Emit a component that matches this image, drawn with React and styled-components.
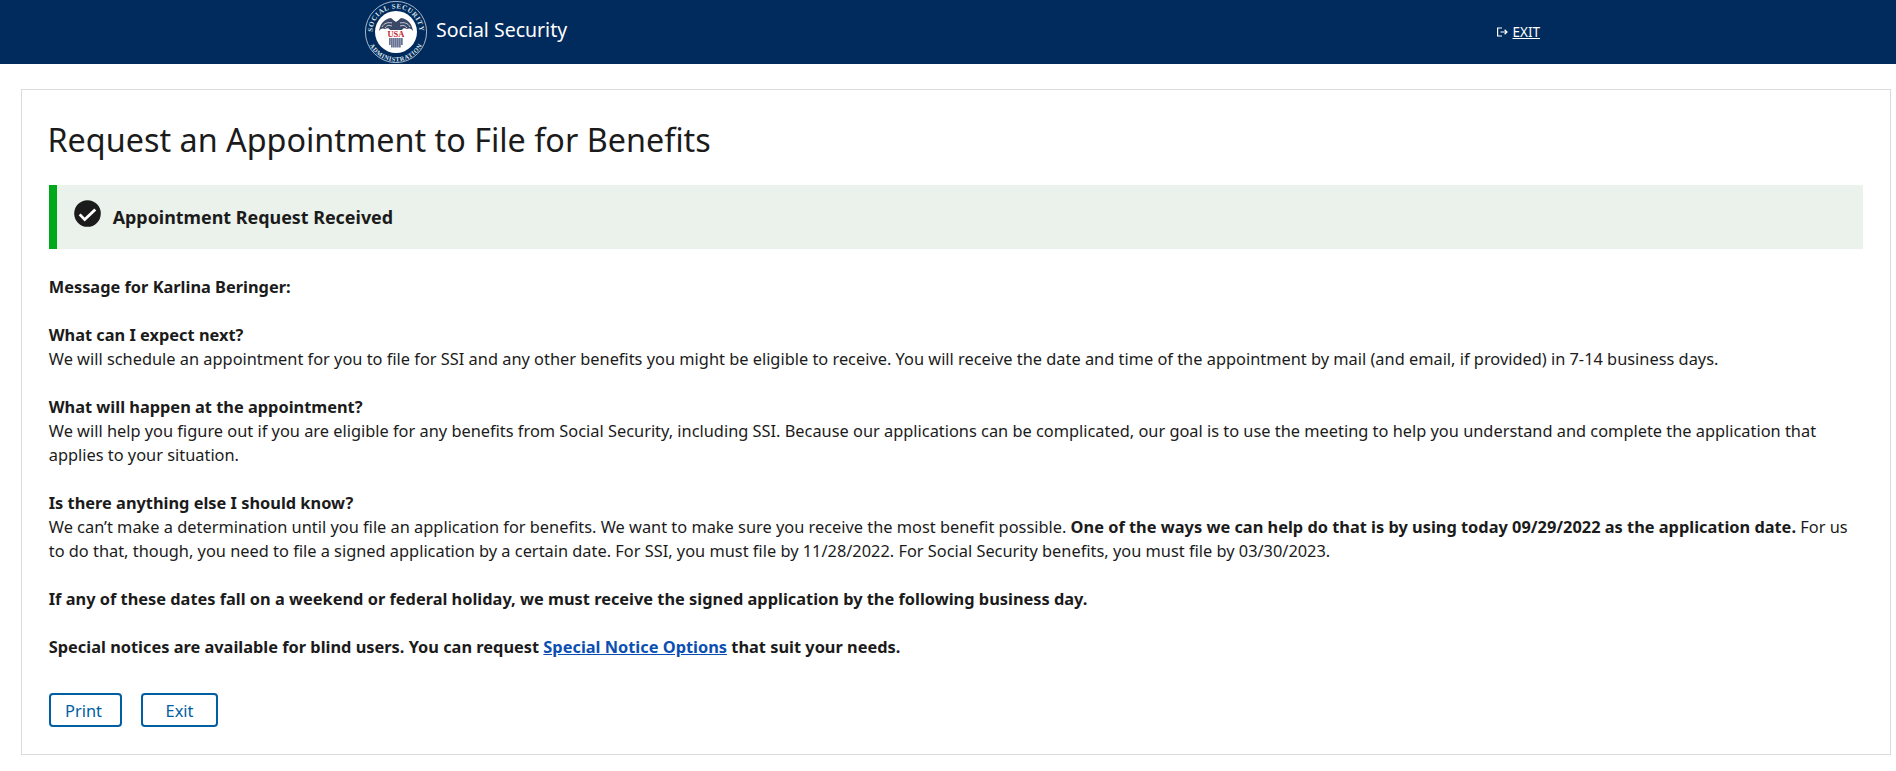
import React from "react";
import styled, { createGlobalStyle } from "styled-components";

const Global = createGlobalStyle`
  html, body { margin: 0; padding: 0; background: #fff; }
  body { font-family: "Noto Sans", "Open Sans", sans-serif; font-size: 16.38px; line-height: 24px; color: #1b1b1b; }
`;

const Header = styled.header`
  height: 64px;
  background: #002b5c;
  display: grid;
  grid-template-columns: 364px 1fr auto 356px;
  align-items: center;
  color: #fff;
`;
const Brand = styled.a`
  grid-column: 2;
  display: flex;
  align-items: center;
  gap: 8px;
  height: 64px;
  color: #fff;
  font-size: 19.5px;
`;
const BrandName = styled.span`
  position: relative;
  top: -2px;
  line-height: 30px;
`;
const ExitLink = styled.a`
  grid-column: 3;
  display: flex;
  align-items: center;
  gap: 5px;
  font-size: 13.5px;
  line-height: 18px;
  color: #fff;
  span { text-decoration: underline; }
`;
const Card = styled.main`
  margin: 25px 5px 0 21px;
  height: 666px;
  box-sizing: border-box;
  border: 1px solid #dcdcdc;
  padding: 0 27px 0 27px;
`;
const Title = styled.h1`
  margin: 0 0 0 -1.5px;
  padding-top: 26px;
  font-size: 32.35px;
  line-height: 46px;
  font-weight: 400;
`;
const Alert = styled.div`
  margin-top: 23px;
  height: 64px;
  box-sizing: border-box;
  background: #ebf2eb;
  border-left: 8px solid #00a91c;
  display: flex;
  align-items: center;
  gap: 12px;
  padding-left: 16.7px;
`;
const AlertIcon = styled.svg`
  width: 27px;
  height: 27px;
  position: relative;
  top: -4px;
`;
const AlertTitle = styled.strong`
  font-size: 17.9px;
  font-weight: 700;
`;
const Body = styled.div`
  margin: 26px 0 0 -0.25px;
`;
const Para = styled.p`
  margin: 0 0 24px;
`;
const Link = styled.a`
  color: #0b4fb3;
  text-decoration: underline;
`;
const Actions = styled.div`
  display: flex;
  gap: 19px;
  margin-top: 34px;
`;
const Button = styled.button`
  font: inherit;
  color: #005ea2;
  background: #fff;
  border: 2px solid #005ea2;
  border-radius: 4px;
  height: 34px;
  width: ${(p) => p.$w}px;
  padding: 1px ${(p) => p.$right || 0}px 0 0;
`;

function Seal() {
  const bars = [0, 1, 2, 3, 4, 5, 6];
  return (
    <svg width="64" height="64" viewBox="0 0 64 64">
      <defs>
        <path id="sealTop" d="M 9.9 40 A 23.5 23.5 0 1 1 54.1 40" />
        <path id="sealBot" d="M 4.4 21.9 A 29.4 29.4 0 1 0 59.6 21.9" />
      </defs>
      <circle cx="32" cy="32" r="30.6" fill="#002b5c" stroke="#b9c5d6" strokeWidth="0.9" />
      <circle cx="32" cy="32" r="21" fill="#fff" />
      <text fontFamily="Liberation Serif, serif" fontSize="7" fontWeight="700" fill="#dfe5ee" letterSpacing="0.6">
        <textPath href="#sealTop" startOffset="50%" textAnchor="middle">SOCIAL SECURITY</textPath>
      </text>
      <text fontFamily="Liberation Serif, serif" fontSize="6.4" fontWeight="700" fill="#dfe5ee" letterSpacing="0.5">
        <textPath href="#sealBot" startOffset="50%" textAnchor="middle">ADMINISTRATION</textPath>
      </text>
      <path d="M15 31 C16 24 20 19 27 18 C29 20 31 21 32 22 C33 21 35 20 37 18 C44 19 48 24 49 31 C47 28 45 28 43 29 C41 28 39 28 38 30 L26 30 C25 28 23 28 21 29 C19 28 17 28 15 31 Z" fill="#3a4766" />
      <path d="M18 27 C20 23 24 22 28 23 M46 27 C44 23 40 22 36 23 M21 28 C23 25 25 25 28 26 M43 28 C41 25 39 25 36 26" stroke="#fff" strokeWidth="0.7" fill="none" />
      <text x="32" y="36.5" textAnchor="middle" fontFamily="Liberation Serif, serif" fontWeight="700" fontSize="8.5" fill="#c8202f">USA</text>
      {bars.map((i) => (
        <rect key={i} x={25.2 + i * 2} y={38} width="1.4" height={i === 0 || i === 6 ? 7 : 9.5} fill="#46537a" />
      ))}
    </svg>
  );
}

export default function App() {
  return (
    <>
      <Global />
      <Header>
        <Brand>
          <Seal />
          <BrandName>Social Security</BrandName>
        </Brand>
        <ExitLink>
          <svg width="12" height="12" viewBox="0 0 12 12" fill="none" stroke="#fff" strokeWidth="1.2">
            <path d="M6 2H1.6v8H6" />
            <path d="M4.5 6H11M8.6 3.8 11 6 8.6 8.2" />
          </svg>
          <span>EXIT</span>
        </ExitLink>
      </Header>
      <Card>
        <Title>Request an Appointment to File for Benefits</Title>
        <Alert>
          <AlertIcon viewBox="0 0 27 27">
            <circle cx="13.5" cy="13.5" r="13.3" fill="#1b1b1b" />
            <path d="M5.7 14.4 10.7 19.6 21.3 9.6" fill="none" stroke="#fff" strokeWidth="2.8" />
          </AlertIcon>
          <AlertTitle>Appointment Request Received</AlertTitle>
        </Alert>
        <Body>
          <Para><strong>Message for Karlina Beringer:</strong></Para>
          <Para>
            <strong>What can I expect next?</strong><br />
            We will schedule an appointment for you to file for SSI and any other benefits you might be eligible to receive. You will receive the date and time of the appointment by mail (and email, if provided) in 7-14 business days.
          </Para>
          <Para>
            <strong>What will happen at the appointment?</strong><br />
            We will help you figure out if you are eligible for any benefits from Social Security, including SSI. Because our applications can be complicated, our goal is to use the meeting to help you understand and complete the application that applies to your situation.
          </Para>
          <Para>
            <strong>Is there anything else I should know?</strong><br />
            We can’t make a determination until you file an application for benefits. We want to make sure you receive the most benefit possible. <strong>One of the ways we can help do that is by using today 09/29/2022 as the application date.</strong> For us to do that, though, you need to file a signed application by a certain date. For SSI, you must file by 11/28/2022. For Social Security benefits, you must file by 03/30/2023.
          </Para>
          <Para><strong>If any of these dates fall on a weekend or federal holiday, we must receive the signed application by the following business day.</strong></Para>
          <Para><strong>Special notices are available for blind users. You can request <Link href="#">Special Notice Options</Link> that suit your needs.</strong></Para>
        </Body>
        <Actions>
          <Button $w={73} $right={4}>Print</Button>
          <Button $w={77}>Exit</Button>
        </Actions>
      </Card>
    </>
  );
}
